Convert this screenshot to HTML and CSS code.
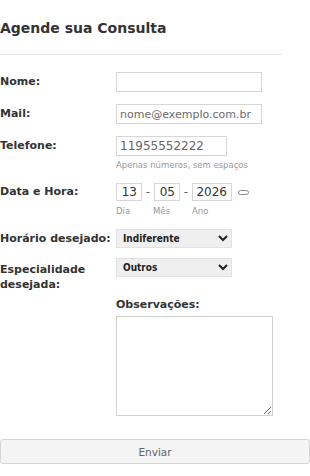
FILE: index.html
```html
<!DOCTYPE html>
<html lang="pt-BR">
<head>
<meta charset="utf-8">
<title>Agende sua Consulta</title>
<link rel="stylesheet" href="styles.css">
</head>
<body>
<div class="page">
  <h1 class="title">Agende sua Consulta</h1>
  <hr class="divider">
  <form class="form">
    <div class="row">
      <label class="label">Nome:</label>
      <input class="field field-wide" type="text" value="">
    </div>
    <div class="row">
      <label class="label">Mail:</label>
      <input class="field field-wide field-mail" type="text" value="nome@exemplo.com.br">
    </div>
    <div class="row row-phone">
      <label class="label">Telefone:</label>
      <div class="stack">
        <input class="field field-phone" type="text" value="11955552222">
        <span class="hint">Apenas números, sem espaços</span>
      </div>
    </div>
    <div class="row row-date">
      <label class="label label-date">Data e Hora:</label>
      <div class="stack">
        <div class="date-line">
          <input class="field date date-d" type="text" value="13">
          <span class="dash">-</span>
          <input class="field date date-m" type="text" value="05">
          <span class="dash">-</span>
          <input class="field date date-y" type="text" value="2026">
          <span class="capsule"></span>
        </div>
        <div class="date-hints">
          <span class="hint hint-d">Dia</span>
          <span class="hint hint-m">Mês</span>
          <span class="hint hint-y">Ano</span>
        </div>
      </div>
    </div>
    <div class="row row-sel1">
      <label class="label label-sel">Horário desejado:</label>
      <select class="select"><option>Indiferente</option></select>
    </div>
    <div class="row row-sel2">
      <label class="label label-two">Especialidade desejada:</label>
      <select class="select"><option>Outros</option></select>
    </div>
    <div class="obs">
      <label class="label label-obs">Observações:</label>
      <textarea class="textarea"></textarea>
    </div>
    <button class="button" type="button">Enviar</button>
  </form>
</div>
</body>
</html>
```
FILE: styles.css
```css
* { box-sizing: border-box; }
html, body {
  margin: 0;
  padding: 0;
  background: #fff;
}
body {
  font-family: "DejaVu Sans", Verdana, sans-serif;
  color: #333;
}
.page {
  width: 310px;
}
.title {
  margin: 0;
  padding-top: 19px;
  font-size: 14px;
  line-height: 18px;
  font-weight: bold;
  color: #333;
}
.divider {
  margin: 17px 0 0 0;
  width: 282px;
  border: 0;
  border-top: 1px solid #e6e6e6;
  height: 0;
}
.form {
  padding-top: 17px;
  display: flex;
  flex-direction: column;
}
.row {
  display: flex;
  align-items: flex-start;
  margin-bottom: 12px;
}
.label {
  width: 116px;
  flex: none;
  font-size: 11px;
  font-weight: bold;
  line-height: 20px;
  color: #333;
}
.label-date { line-height: 18px; }
.label-sel { line-height: 19px; }
.label-two {
  line-height: 15px;
  padding-top: 4px;
}
.stack {
  display: flex;
  flex-direction: column;
}
.field {
  display: block;
  height: 20px;
  padding: 0 3px;
  margin: 0;
  border: 1px solid #d6d6d6;
  border-radius: 0;
  font-family: "DejaVu Sans", Verdana, sans-serif;
  font-size: 12px;
  color: #666;
  background: #fff;
  outline: none;
}
.field-wide { width: 146px; }
.field-mail { font-size: 11px; color: #6a6a6a; }
.field-phone { width: 111px; }
.hint {
  font-size: 8.5px;
  line-height: 11px;
  color: #999;
}
.stack > .hint { margin-top: 4px; }
.date-line {
  display: flex;
  align-items: center;
}
.date {
  height: 18px;
  text-align: right;
  padding: 0 4px 0 2px;
  color: #333;
}
.date-d, .date-m { width: 26px; }
.date-y { width: 40px; }
.dash {
  width: 12px;
  text-align: center;
  font-size: 12px;
  color: #666;
}
.capsule {
  margin-left: 6px;
  width: 11px;
  height: 5px;
  border: 1px solid #8a8a8a;
  border-radius: 3px;
}
.date-hints {
  display: flex;
  margin-top: 5px;
}
.hint-d { width: 37px; }
.hint-m { width: 39px; }
.row-date { margin-bottom: 12px; }
.row-sel1 { margin-bottom: 10px; }
.row-sel2 { margin-bottom: 5px; }
.select {
  width: 116px;
  height: 19px;
  margin: 0;
  padding: 0 2px;
  font-family: "DejaVu Sans Condensed", "DejaVu Sans", sans-serif;
  font-weight: bold;
  font-size: 10px;
  color: #222;
  background-color: #efefef;
  border: 1px solid #e2e2e2;
  border-radius: 0;
}
.obs {
  margin-left: 116px;
  display: flex;
  flex-direction: column;
}
.label-obs {
  line-height: 15px;
}
.textarea {
  display: block;
  margin-top: 4px;
  width: 157px;
  height: 100px;
  border: 1px solid #d0d0d0;
  background: #fff;
  font-family: "DejaVu Sans", sans-serif;
  font-size: 12px;
}
.button {
  margin-top: 23px;
  width: 310px;
  height: 25px;
  border: 1px solid #d4d4d4;
  border-radius: 3px;
  background: #f4f4f4;
  font-family: "DejaVu Sans", Verdana, sans-serif;
  font-size: 10.5px;
  color: #666;
  padding: 0;
}
```
